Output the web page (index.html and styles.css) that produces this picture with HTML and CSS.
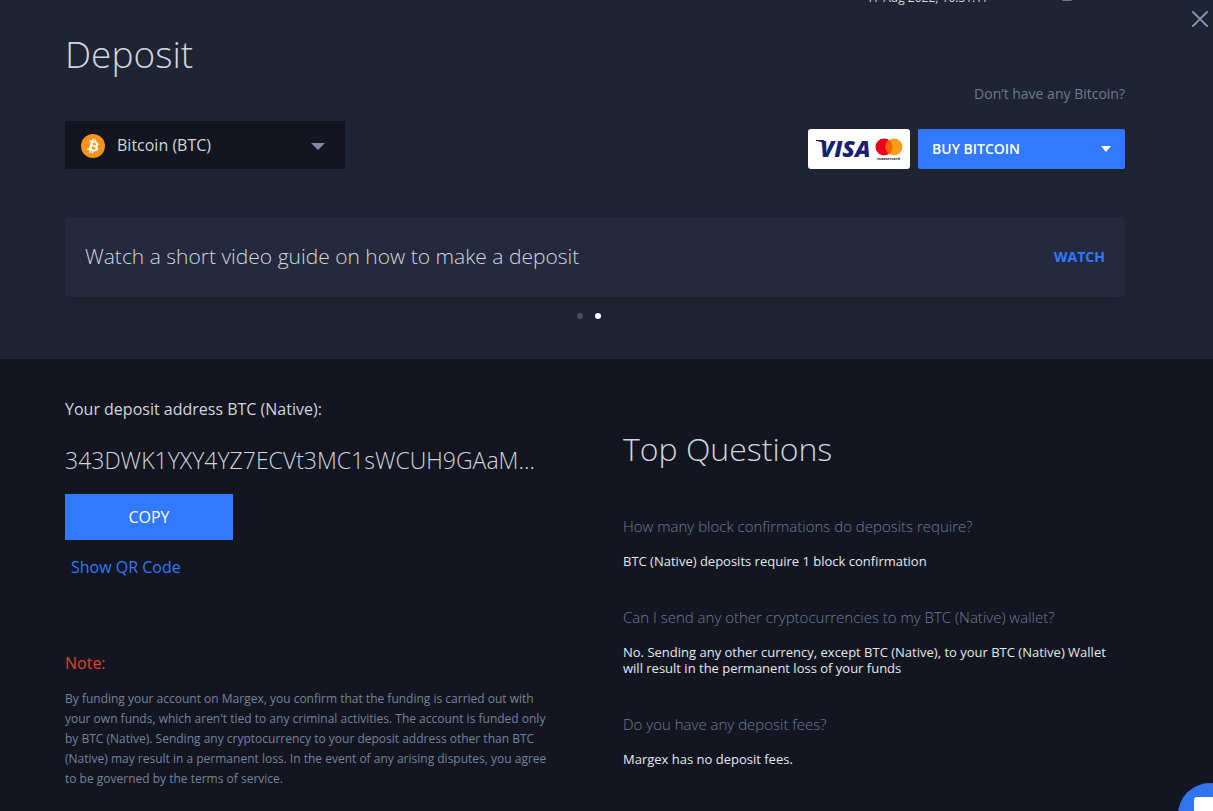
FILE: index.html
```
<!DOCTYPE html>
<html lang="en">
<head>
    <meta charset="UTF-8">
    <meta name="viewport" content="width=device-width, initial-scale=1.0">
    <title>Deposit</title>
    <link rel="stylesheet" href="styles.css">
</head>
<body>
    <!-- Bottom edge of the app bar, seen above the deposit window -->
    <div class="status-bar">
        <time class="clock">17 Aug 2022, 10:31:17</time>
        <span class="status-icon"></span>
    </div>
    <button class="close-btn" aria-label="Close">
        <svg width="16" height="16" viewBox="0 0 16 16">
            <path d="M1 1L15 15M15 1L1 15" fill="none" stroke="#8490ab" stroke-width="2" stroke-linecap="round"/>
        </svg>
    </button>

    <section class="deposit">
        <h1>Deposit</h1>

        <div class="deposit-row">
            <div class="currency">
                <svg class="btc-icon" width="24" height="24" viewBox="0 0 32 32">
                    <circle cx="16" cy="16" r="16" fill="#f7931a"/>
                    <path fill="#fff" fill-rule="evenodd" d="M23.2 14c.3-2.1-1.3-3.2-3.5-4l.7-2.8-1.7-.4-.7 2.7-1.4-.3.7-2.8-1.7-.4-.7 2.8-1.1-.3-2.4-.6-.4 1.9 1.2.3c.7.2.8.6.8 1l-2 7.9c-.1.2-.3.5-.8.4l-1.2-.3-.9 2 2.3.6 1.2.3-.7 2.9 1.7.4.7-2.9 1.4.4-.7 2.8 1.7.4.7-2.9c2.9.6 5.2.3 6.1-2.3.8-2.1 0-3.3-1.5-4.1 1.1-.3 1.9-1 2.2-2.7zm-3.9 5.5c-.5 2.1-4.1 1-5.2.7l.9-3.8c1.2.3 4.9.9 4.3 3.1zm.6-5.5c-.5 1.9-3.5.9-4.4.7l.9-3.4c1 .2 4.1.7 3.5 2.7z"/>
                </svg>
                <select class="currency-select" aria-label="Currency">
                    <option>Bitcoin (BTC)</option>
                </select>
                <svg class="currency-arrow" width="14" height="7" viewBox="0 0 14 7">
                    <path d="M0 0H14L7 7Z" fill="#7f88a6"/>
                </svg>
            </div>

            <div class="buy">
                <p class="buy-hint">Don’t have any Bitcoin?</p>
                <div class="buy-row">
                    <svg class="cards" width="102" height="40" viewBox="0 0 102 40" role="img" aria-label="Visa and Mastercard">
                        <rect width="102" height="40" rx="3" fill="#fff"/>
                        <path d="M8 11H16L18 18C16 14 12 12 8 12Z" fill="#1a1f71"/>
                        <text class="visa" x="12" y="28">VISA</text>
                        <circle cx="76" cy="18" r="8.5" fill="#eb001b"/>
                        <circle cx="86" cy="18" r="8.5" fill="#f79e1b"/>
                        <path d="M81 11.1A8.5 8.5 0 0 1 81 24.9A8.5 8.5 0 0 1 81 11.1Z" fill="#ff5f00"/>
                        <text class="mastercard" x="69" y="31">mastercard</text>
                    </svg>
                    <button class="buy-btn">
                        BUY BITCOIN
                        <svg width="10" height="6" viewBox="0 0 10 6">
                            <path d="M0 0H10L5 6Z" fill="#fff"/>
                        </svg>
                    </button>
                </div>
            </div>
        </div>

        <div class="guide">
            <p>Watch a short video guide on how to make a deposit</p>
            <a href="#">WATCH</a>
        </div>
        <div class="dots">
            <button class="dot" aria-label="Slide 1"></button>
            <button class="dot active" aria-label="Slide 2"></button>
        </div>
    </section>

    <main class="details">
        <div class="address-column">
            <h2 class="address-title">Your deposit address BTC (Native):</h2>
            <p class="address">343DWK1YXY4YZ7ECVt3MC1sWCUH9GAaM...</p>
            <button class="copy-btn">COPY</button>
            <a class="qr-link" href="#">Show QR Code</a>

            <h3 class="note-title">Note:</h3>
            <p class="note">By funding your account on Margex, you confirm that the funding is carried out with your own funds, which aren't tied to any criminal activities. The account is funded only by BTC (Native). Sending any cryptocurrency to your deposit address other than BTC (Native) may result in a permanent loss. In the event of any arising disputes, you agree to be governed by the terms of service.</p>
        </div>

        <div class="questions">
            <h2>Top Questions</h2>
            <h3>How many block confirmations do deposits require?</h3>
            <p>BTC (Native) deposits require 1 block confirmation</p>
            <h3>Can I send any other cryptocurrencies to my BTC (Native) wallet?</h3>
            <p>No. Sending any other currency, except BTC (Native), to your BTC (Native) Wallet will result in the permanent loss of your funds</p>
            <h3>Do you have any deposit fees?</h3>
            <p>Margex has no deposit fees.</p>
        </div>
    </main>

    <button class="chat-btn" aria-label="Open chat">
        <svg width="64" height="64" viewBox="0 0 64 64">
            <circle cx="32" cy="32" r="32" fill="#3074f0"/>
            <path d="M19 14H45Q48 14 48 17V50L38 44H19Q16 44 16 41V17Q16 14 19 14Z" fill="#fff"/>
        </svg>
    </button>
</body>
</html>
```
FILE: styles.css
```
* {
    box-sizing: border-box;
}

body {
    font-family: "Open Sans", sans-serif;
    background-color: #131520;
    color: #cfd6dd;
    margin: 0;
    min-height: 100vh;
    overflow: hidden;
}

h1, h2, h3, p {
    margin: 0;
}

button, select {
    font-family: inherit;
    border: none;
    cursor: pointer;
}

a {
    color: #3179ff;
    text-decoration: none;
}

.status-bar {
    position: absolute;
    top: 0;
    right: 140px;
    height: 6px;
    display: flex;
    align-items: flex-end;
    gap: 72px;
}

.clock {
    font-size: 12px;
    line-height: 16px;
}

.status-icon {
    width: 12px;
    height: 12px;
    margin-bottom: 5px;
    border-radius: 3px;
    background-color: #6e7a95;
}

.close-btn {
    position: absolute;
    top: 7px;
    right: 1px;
    padding: 4px;
    background: none;
}

.close-btn svg,
.chat-btn svg {
    display: block;
}

.deposit {
    background-color: #1e2433;
    padding: 28px 88px 40px 65px;
}

h1 {
    font-size: 37px;
    font-weight: 300;
    line-height: 52px;
}

.deposit-row {
    display: flex;
    justify-content: space-between;
    align-items: flex-end;
    margin-bottom: 48px;
}

.currency {
    position: relative;
    width: 280px;
}

.currency-select {
    appearance: none;
    width: 100%;
    height: 48px;
    padding: 0 40px 0 52px;
    background-color: #131520;
    color: #cfd6dd;
    font-size: 16px;
}

.btc-icon {
    position: absolute;
    left: 16px;
    top: 13px;
}

.currency-arrow {
    position: absolute;
    right: 20px;
    top: 22px;
    pointer-events: none;
}

.buy-hint {
    color: #6c7a8f;
    font-size: 14px;
    line-height: 20px;
    margin: 4px 0 25px;
    text-align: right;
}

.buy-row {
    display: flex;
    gap: 8px;
}

.visa {
    fill: #1a1f71;
    font-size: 23px;
    font-weight: 800;
    font-style: italic;
}

.mastercard {
    fill: #231f20;
    font-size: 4px;
    font-weight: 700;
}

.buy-btn {
    display: flex;
    justify-content: space-between;
    align-items: center;
    width: 207px;
    height: 40px;
    padding: 0 14px 1px;
    border-radius: 2px;
    background-color: #3179ff;
    color: white;
    font-size: 14px;
    font-weight: 600;
}

.guide {
    display: flex;
    justify-content: space-between;
    align-items: center;
    height: 80px;
    padding: 0 20px 2px;
    border-radius: 4px;
    background-color: #25293d;
    box-shadow: 0 10px 10px -6px #1b202d;
}

.guide p {
    font-size: 21px;
    font-weight: 350;
}

.guide a {
    font-size: 14px;
    font-weight: 700;
}

.dots {
    display: flex;
    justify-content: center;
    gap: 12px;
    padding: 16px 12px 0 0;
}

.dot {
    width: 6px;
    height: 6px;
    padding: 0;
    border-radius: 50%;
    background-color: #4b4e5f;
}

.dot.active {
    background-color: white;
}

.details {
    display: grid;
    grid-template-columns: minmax(0, 1fr) minmax(0, 1fr);
    gap: 56px;
    padding: 38px 88px 20px 65px;
}

.address-column {
    padding-right: 16px;
}

.address-title {
    font-size: 16px;
    font-weight: 400;
    line-height: 24px;
    margin-bottom: 22px;
}

.address {
    font-size: 23px;
    font-weight: 300;
    line-height: 34px;
    margin-bottom: 17px;
}

.copy-btn {
    display: block;
    width: 168px;
    height: 46px;
    background-color: #3179ff;
    color: white;
    font-size: 16px;
}

.qr-link {
    display: inline-block;
    padding: 0 6px;
    margin-top: 15px;
    font-size: 16px;
    line-height: 24px;
}

.note-title {
    color: #e2412a;
    font-size: 16px;
    font-weight: 400;
    line-height: 24px;
    margin: 72px 0 14px;
}

.note {
    color: #75839c;
    font-size: 12px;
    line-height: 20px;
}

.questions h2 {
    font-size: 32px;
    font-weight: 300;
    line-height: 44px;
    margin: 30px 0 43px;
}

.questions h3 {
    color: #6c7e9b;
    font-size: 15px;
    font-weight: 300;
    line-height: 24px;
    margin-bottom: 15px;
}

.questions p {
    color: #e4e9ee;
    font-size: 13px;
    line-height: 16px;
    margin-bottom: 36px;
}

.chat-btn {
    position: fixed;
    right: -29px;
    bottom: -36px;
    padding: 0;
    background: none;
}
```
